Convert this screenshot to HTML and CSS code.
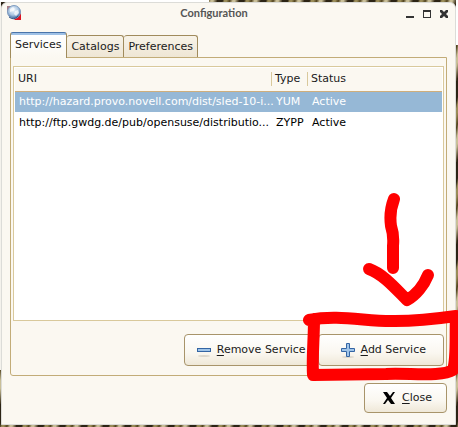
FILE: index.html
```
<!DOCTYPE html>
<html lang="en">

	<head>
		<meta charset="UTF-8">
		<title>Configuration</title>
		<link rel="stylesheet" href="styles.css">
	</head>

	<body>

		<div class="window">
			<div class="titlebar">
				<svg class="app-icon" width="16" height="16" viewBox="0 0 16 16">
					<defs>
						<radialGradient id="globe" cx="45%" cy="35%" r="65%">
							<stop offset="0" stop-color="#f2f8fd" />
							<stop offset="0.6" stop-color="#a9c4e0" />
							<stop offset="1" stop-color="#38649e" />
						</radialGradient>
					</defs>
					<path d="M1 1h6v6H1z" fill="#a77c86" />
					<path d="M8 15l7-7v7z" fill="#dc1422" />
					<circle cx="8" cy="7" r="6.5" fill="url(#globe)" stroke="#7f9cc0" />
					<path d="M4 4l3-2 2 2-2 2-3 1zM9 6l3-1 1 3-3 3-2-2z" fill="#fff" opacity="0.7" />
					<path d="M3 12q5 4 9-1" fill="none" stroke="#385887" />
				</svg>
				<h1>Configuration</h1>
				<div class="controls">
					<button class="control" aria-label="Minimize">
						<svg width="8" height="9"><path d="M0 7h8v2H0z" fill="#333" /></svg>
					</button>
					<button class="control" aria-label="Maximize">
						<svg width="8" height="9"><path d="M0 1h8v8H0zM1 3v5h6V3z" fill="#333" fill-rule="evenodd" /></svg>
					</button>
					<button class="control" aria-label="Close window">
						<svg width="8" height="9"><path d="M0 1h2l2 2 2-2h2v2L6 5l2 2v2H6L4 7 2 9H0V7l2-2-2-2z" fill="#333" /></svg>
					</button>
				</div>
			</div>

			<div class="tabs" role="tablist">
				<button class="tab active" role="tab" aria-selected="true">Services</button>
				<button class="tab" role="tab" aria-selected="false">Catalogs</button>
				<button class="tab" role="tab" aria-selected="false">Preferences</button>
			</div>

			<div class="panel" role="tabpanel">
				<div class="list">
					<table>
						<thead>
							<tr>
								<th><span>URI</span></th>
								<th class="type"><span>Type</span></th>
								<th class="status"><span>Status</span></th>
							</tr>
						</thead>
						<tbody>
							<tr class="selected">
								<td>http://hazard.provo.novell.com/dist/sled-10-i...</td>
								<td>YUM</td>
								<td>Active</td>
							</tr>
							<tr>
								<td>http://ftp.gwdg.de/pub/opensuse/distributio...</td>
								<td>ZYPP</td>
								<td>Active</td>
							</tr>
						</tbody>
					</table>
				</div>
				<div class="actions">
					<button class="btn remove">
						<svg width="16" height="16">
							<ellipse cx="8" cy="14" rx="6" ry="1" fill="#ddd8cc" />
							<rect x="1.5" y="6.5" width="13" height="3" fill="#9fc4e8" stroke="#3465a4" />
						</svg>
						<span><u>R</u>emove Service</span>
					</button>
					<button class="btn add">
						<svg width="16" height="16">
							<ellipse cx="8" cy="15" rx="6" ry="1" fill="#ddd8cc" />
							<path d="M6.500 1.500h3v5h5v3h-5v5h-3v-5h-5v-3h5z" fill="#9fc4e8" stroke="#3465a4" />
						</svg>
						<span><u>A</u>dd Service</span>
					</button>
				</div>
			</div>

			<div class="footer">
				<button class="btn close">
					<svg width="16" height="16"><path d="M2 2h4l3 4 3-4h2l-4 6 4 6h-4l-3-4-3 4H2l4-6z" fill="#000" /></svg>
					<span><u>C</u>lose</span>
				</button>
			</div>

			<!-- hand drawn arrow and box around the add button -->
			<svg class="marker" width="160" height="190" viewBox="298 192 160 190">
				<path d="M394 199q-5 13-3 27 3 9 2 20v22" />
				<path d="M369 269c14 5 26 19 38 31 9-5 17-15 21-25" />
				<path d="M309 320c30-6 59 2 86 1 22 0 40-2 61-5-1 20 1 42-3 54-11 7-42 3-67 4l-73 1c-1-18 1-36 1-56" />
			</svg>
		</div>

	</body>

</html>
```

FILE: styles.css
```
* {
	box-sizing: border-box;
}

body {
	margin: 0;
	min-height: 100vh;
	padding: 2px 2px 2px 1px;
	display: flex;
	font: 11px/14px "DejaVu Sans", sans-serif;
	color: #1a1a1a;
	background:
		linear-gradient(#fff, #fff) left top / 209px 2px no-repeat,
		linear-gradient(#f4f2ec, #f4f2ec) left top / 1px 370px no-repeat,
		linear-gradient(#fff, #fff) right top / 2px 45px no-repeat,
		repeating-linear-gradient(105deg, #2c2415 0 5px, #9a8c58 7px 9px, #51431f 12px, #c9bf98 15px 17px, #3a2f1b 21px);
}

button {
	font: inherit;
	color: inherit;
	margin: 0;
}

.window {
	position: relative;
	flex: 1;
	min-width: 0;
	display: flex;
	flex-direction: column;
	padding: 0 8px 11px;
	background-color: #fbf8f1;
	border: 1px solid #dcdcd8;
	border-radius: 6px 6px 0 0;
}

.titlebar {
	display: flex;
	align-items: center;
	justify-content: space-between;
	height: 20px;
	margin: 0 -4px 9px;
}

.titlebar h1 {
	margin: 0;
	font: bold 11px/14px Lato, sans-serif;
	color: #555;
}

.controls {
	display: flex;
	gap: 9px;
	margin-right: 3px;
}

.control {
	padding: 0;
	border: 0;
	background: none;
}

.control svg {
	display: block;
}

.tabs {
	display: flex;
	align-items: flex-end;
	height: 25px;
}

.tab {
	height: 22px;
	padding: 1px 4px 0;
	border: 1px solid #a08b5c;
	border-width: 1px 1px 0 0;
	border-radius: 3px 3px 0 0;
	background-image: linear-gradient(#f8f3e8, #eee6d5);
}

.tab.active {
	position: relative;
	height: 26px;
	margin-bottom: -1px;
	padding: 0 5px 1px 4px;
	border-left-width: 1px;
	border-top-color: #4a74aa;
	background-image: linear-gradient(#9fc1e6 2px, #fff 2px, #fbf8f1);
}

.panel {
	flex: 1;
	display: flex;
	flex-direction: column;
	padding: 8px 2px 9px;
	border: 1px solid #c2ac78;
	border-radius: 0 0 3px 3px;
}

.list {
	flex: 1;
	padding: 1px;
	border: 1px solid #d9c99c;
	background-color: #fff;
}

table {
	width: 100%;
	table-layout: fixed;
	border-collapse: collapse;
}

th {
	height: 23px;
	padding: 0;
	font-weight: normal;
	text-align: left;
	background-color: #fbf8f1;
	border-bottom: 1px solid #cfae7c;
}

th span {
	display: block;
	padding-left: 3px;
	border-right: 1px solid #d9c99c;
}

th:last-child span {
	border-right: 0;
}

.type {
	width: 36px;
}

.status {
	width: 134px;
}

td {
	height: 21px;
	padding: 0 0 0 4px;
	color: #000;
	white-space: nowrap;
}

.selected td {
	color: #fff;
	background-color: #96b8d6;
}

.actions {
	display: flex;
	justify-content: flex-end;
	gap: 4px;
	margin-top: 13px;
}

.btn {
	display: flex;
	align-items: center;
	gap: 5px;
	height: 32px;
	padding: 0 7px 0 11px;
	border: 1px solid #a8946a;
	border-radius: 4px;
	background-image: linear-gradient(#fff, #faf7f0 60%, #efe8d8);
}

.btn u {
	text-underline-offset: 2px;
}

.add {
	padding: 0 17px 0 21px;
}

.footer {
	display: flex;
	justify-content: flex-end;
	margin-top: 7px;
}

.close {
	height: 30px;
	padding: 0 14px 0 16px;
}

.marker {
	position: absolute;
	right: -3px;
	bottom: 42px;
	fill: none;
	stroke: #f00;
	stroke-width: 12px;
	stroke-linecap: round;
	stroke-linejoin: round;
	pointer-events: none;
}
```
